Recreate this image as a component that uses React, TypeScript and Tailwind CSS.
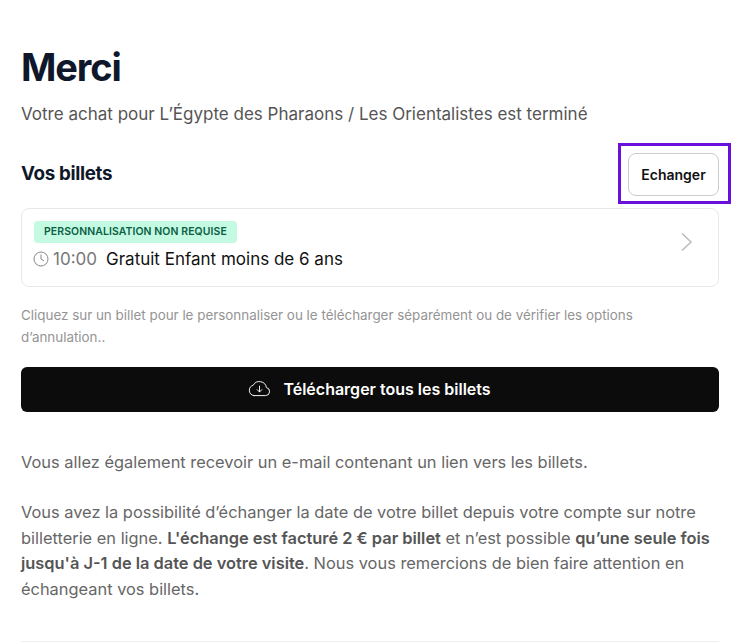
import React from "react";

export default function App() {
  return (
    <div className="h-[642px] w-[743px] overflow-hidden bg-white font-['Inter',sans-serif]">
      <div className="ml-[21px] w-[698px] pt-[42px]">
        <h1 className="text-[38px] leading-[50px] font-bold tracking-[-1.1px] text-[#0f172a]">Merci</h1>
        <p className="mt-[10px] text-[17px] leading-6 text-[#555555]">
          Votre achat pour L’Égypte des Pharaons / Les Orientalistes est terminé
        </p>
        <div className="mt-[27px] flex h-[43px] items-center justify-between">
          <h2 className="mb-[2px] text-[18.8px] leading-7 font-bold tracking-[-0.35px] text-[#0f172a]">Vos billets</h2>
          <div className="relative">
            <button className="flex h-[43px] w-[91px] items-center justify-center rounded-lg border border-[#cccccc] bg-white text-sm font-semibold text-[#111111]">
              Echanger
            </button>
            <div className="absolute top-[-10px] left-[-10px] h-[61px] w-[113px] border-[3px] border-[#6a0fdc]" />
          </div>
        </div>
        <div className="mt-3 flex h-[79px] items-start justify-between rounded-lg border border-[#e8e8e8] pt-3 pr-6 pl-3">
          <div className="flex flex-col items-start">
            <span className="rounded bg-[#c4f9e2] px-[10px] text-[10.45px] leading-[22px] font-semibold tracking-[0.1px] text-[#0b5f45]">
              PERSONNALISATION NON REQUISE
            </span>
            <div className="mt-1 flex items-center text-[17px] leading-6">
              <svg width="16" height="16" viewBox="0 0 16 16" fill="none" stroke="#888888" strokeWidth="1" className="mr-[3px] -ml-px">
                <circle cx="8" cy="8" r="7" />
                <path d="M8 3.5V8l3 1.8" />
              </svg>
              <span className="ml-px text-[#777777]">10:00</span>
              <span className="ml-[9px] text-[#111111]">Gratuit Enfant moins de 6 ans</span>
            </div>
          </div>
          <svg width="14" height="20" viewBox="0 0 14 20" fill="none" stroke="#bbbbbb" strokeWidth="1.5" className="mt-[11px] -mr-px -translate-x-px">
            <path d="M2 1.5 11 10 2 18.5" />
          </svg>
        </div>
        <p className="mt-[17px] text-[13.4px] leading-[22px] text-[#949494]">
          Cliquez sur un billet pour le personnaliser ou le télécharger séparément ou de vérifier les options d’annulation..
        </p>
        <button className="mt-[19px] flex h-[45px] w-full items-center justify-center gap-[12px] rounded-md bg-[#0c0c0c] pb-px text-base font-semibold text-white">
          <svg width="23" height="17" viewBox="0 0 24 18" fill="none" stroke="white" strokeWidth="1" strokeLinecap="round" strokeLinejoin="round" className="-mt-px -ml-px">
            <path d="M6 16.5h12.5a4.3 4.3 0 0 0 .8-8.5 7.5 7.5 0 0 0-14-2.4A5.6 5.6 0 0 0 6 16.5Z" />
            <path d="M12 6.5v6M9.5 10.2 12 12.7l2.5-2.5" />
          </svg>
          Télécharger tous les billets
        </button>
        <p className="mt-[37px] text-[16.4px] leading-[26px] text-[#666666]">
          Vous allez également recevoir un e-mail contenant un lien vers les billets.
        </p>
        <p className="mt-[25px] text-[16.4px] leading-[25.5px] text-[#666666]">
          Vous avez la possibilité d’échanger la date de votre billet depuis votre compte sur notre billetterie en ligne.{" "}
          <strong className="font-semibold text-[#555555]">L'échange est facturé 2 € par billet</strong> et n’est possible{" "}
          <strong className="font-semibold text-[#555555]">qu’une seule fois jusqu'à J-1 de la date de votre visite</strong>. Nous vous remercions de bien faire attention en échangeant vos billets.
        </p>
        <div className="mt-[39px] border-t border-[#f0f0f0]" />
      </div>
    </div>
  );
}
